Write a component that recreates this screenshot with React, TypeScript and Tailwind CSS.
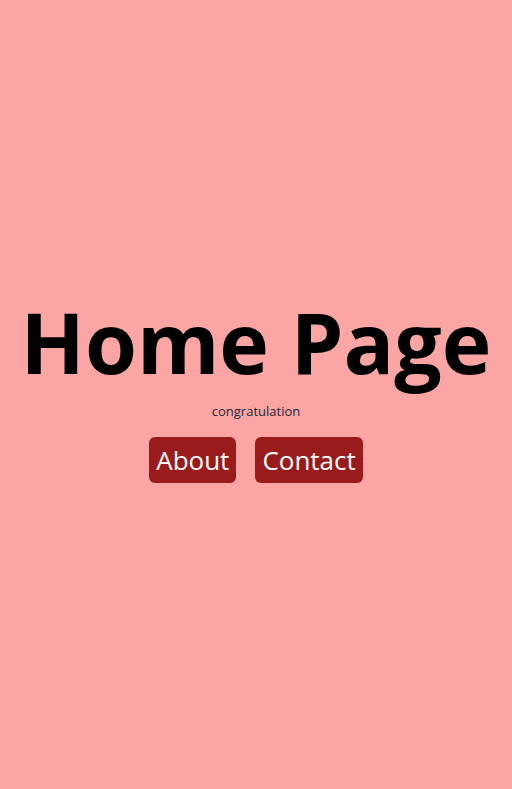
export default function App() {
  return (
    <main className="min-h-screen bg-[#fca5a5] flex flex-col items-center justify-center font-['Open_Sans',sans-serif]">
      {/* Title */}
      <h1 className="text-[84px] font-bold leading-none text-black">Home Page</h1>
      <p className="text-[13px] leading-5 text-[#1f2937] mt-[17px]">congratulation</p>
      {/* Links */}
      <div className="flex gap-[19px] mt-4 mb-[6px]">
        <a href="#" className="bg-[#991b1b] text-white text-[26px] leading-8 px-[7px] py-[7px] rounded-md">
          About
        </a>
        <a href="#" className="bg-[#991b1b] text-white text-[26px] leading-8 px-[7px] py-[7px] rounded-md">
          Contact
        </a>
      </div>
    </main>
  );
}
